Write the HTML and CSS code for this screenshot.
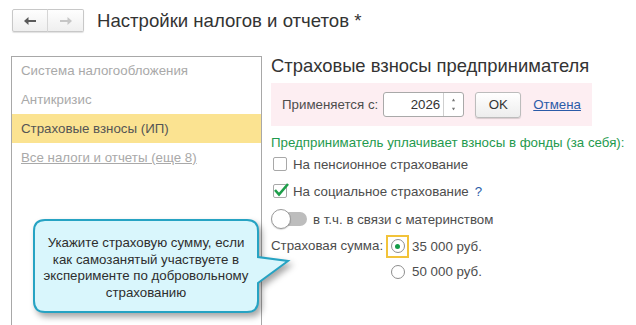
FILE: index.html
```html
<!DOCTYPE html>
<html>
    <head>
        <meta charset="utf-8">
        <meta name="viewport" content="initial-scale=1, width=device-width">
        <title>Настройки налогов и отчетов</title>
        <link rel="stylesheet" href="styles.css">
    </head>
    <body>
    <div class="topbar">
        <div class="history">
            <button class="history-btn" type="button">
                <svg width="12" height="8" viewBox="0 0 12 8"><path d="M0 4 L4.5 0 V3 H12 V5 H4.5 V8 Z" fill="#5a5a5a"/></svg>
            </button>
            <button class="history-btn" type="button">
                <svg width="12" height="8" viewBox="0 0 12 8"><path d="M12 4 L7.5 0 V3 H0 V5 H7.5 V8 Z" fill="#c6c6c6"/></svg>
            </button>
        </div>
        <h1 class="page-title">Настройки налогов и отчетов *</h1>
    </div>

    <div class="workspace">
        <ul class="sections">
            <li class="section">Система налогообложения</li>
            <li class="section">Антикризис</li>
            <li class="section current">Страховые взносы (ИП)</li>
            <li class="section"><a href="#">Все налоги и отчеты (еще 8)</a></li>
        </ul>

        <div class="content">
            <h2 class="content-title">Страховые взносы предпринимателя</h2>
            <div class="apply-bar">
                <span class="apply-label">Применяется с:</span>
                <div class="year-field">
                    <span class="year-value">2026</span>
                    <span class="spin">
                        <svg width="5" height="4" viewBox="0 0 5 4"><path d="M2.5 0 L5 4 H0 Z" fill="#777"/></svg>
                        <svg width="5" height="4" viewBox="0 0 5 4"><path d="M0 0 H5 L2.5 4 Z" fill="#777"/></svg>
                    </span>
                </div>
                <button class="ok-btn" type="button">OK</button>
                <a class="cancel-link" href="#">Отмена</a>
            </div>

            <p class="funds-note">Предприниматель уплачивает взносы в фонды (за себя):</p>
            <div class="option-row row-pension">
                <span class="checkbox"></span>
                На пенсионное страхование
            </div>
            <div class="option-row row-social">
                <span class="checkbox">
                    <svg class="tick" width="16" height="15" viewBox="0 0 16 15"><path d="M2 8 L6 12.5 L15 2" fill="none" stroke="#1e9e4a" stroke-width="2.6"/></svg>
                </span>
                На социальное страхование <span class="help">?</span>
            </div>
            <div class="option-row row-toggle">
                <span class="toggle"><span class="knob"></span></span>
                в т.ч. в связи с материнством
            </div>
            <div class="sum-row">
                <span class="sum-label">Страховая сумма:</span>
                <div class="sum-options">
                    <div class="radio-row first">
                        <span class="radio-focus"><span class="radio on"></span></span>
                        35 000 руб.
                    </div>
                    <div class="radio-row">
                        <span class="radio-focus plain"><span class="radio"></span></span>
                        50 000 руб.
                    </div>
                </div>
            </div>
        </div>
    </div>

    <div class="callout">
        <svg class="callout-shape" width="226" height="94" viewBox="0 0 226 94">
            <path d="M12 1 H214 Q225 1 225 12 V38 L255 42 L225 64 V82 Q225 93 214 93 H12 Q1 93 1 82 V12 Q1 1 12 1 Z" fill="#d9f6fc" stroke="#26a3c3" stroke-width="2"/>
        </svg>
        <div class="callout-text">
            Укажите страховую сумму, если<br>
            как самозанятый участвуете в<br>
            эксперименте по добровольному<br>
            страхованию
        </div>
    </div>
    </body>
</html>
```

FILE: styles.css
```css
body {
    margin: 0;
    height: 100vh;
    overflow: hidden;
    position: relative;
    background-color: #ffffff;
    font-family: "Liberation Sans", Arial, sans-serif;
    font-size: 13.3px;
    color: #4d4d4d;
}
.topbar {
    display: flex;
    align-items: center;
    padding: 9px 0 0 12px;
    height: 23px;
}
.history {
    display: flex;
    box-shadow: 0 1px 1px rgba(0, 0, 0, 0.12);
    border-radius: 2px;
}
.history-btn {
    display: flex;
    align-items: center;
    justify-content: center;
    width: 36px;
    height: 23px;
    padding: 0;
    box-sizing: border-box;
    border: 1px solid #c8c8c8;
    background: linear-gradient(#fefefe, #efefef);
}
.history-btn:first-child {
    border-radius: 2px 0 0 2px;
}
.history-btn + .history-btn {
    border-left: 1px solid #d6d6d6;
    margin-left: -1px;
    width: 37px;
    border-radius: 0 2px 2px 0;
}
.page-title {
    margin: 0 0 0 13px;
    font-size: 18.6px;
    font-weight: normal;
    line-height: 23px;
    color: #333333;
}
.workspace {
    display: flex;
    margin-top: 24px;
    padding-left: 11px;
}
.sections {
    list-style: none;
    margin: 0;
    padding: 0;
    width: 251px;
    height: 300px;
    box-sizing: border-box;
    border: 1px solid #a8a8a8;
    border-bottom: 0;
}
.section {
    height: 29px;
    line-height: 29px;
    padding-left: 9px;
    color: #a9a9a9;
}
.section:first-child {
    height: 28px;
    line-height: 27px;
}
.section.current {
    background-color: #fbe391;
    color: #555555;
}
.section a {
    color: #a9a9a9;
}
.content {
    margin-left: 9px;
    flex: 1;
}
.content-title {
    margin: 0;
    font-size: 18.4px;
    font-weight: normal;
    line-height: 20px;
    color: #333333;
}
.apply-bar {
    display: flex;
    align-items: center;
    margin-top: 7px;
    width: 321px;
    height: 43px;
    padding-left: 11px;
    box-sizing: border-box;
    background-color: #fdeef2;
}
.apply-label {
    margin-right: 5px;
}
.year-field {
    display: flex;
    width: 81px;
    height: 25px;
    box-sizing: border-box;
    border: 1px solid #a9a9a9;
    border-radius: 3px;
    background-color: #ffffff;
}
.year-value {
    flex: 1;
    text-align: right;
    padding-right: 3px;
    line-height: 23px;
    color: #333333;
}
.spin {
    width: 20px;
    border-left: 1px solid #cfcfcf;
    display: flex;
    flex-direction: column;
    align-items: center;
    justify-content: space-between;
    padding: 5px 0;
    box-sizing: border-box;
}
.spin svg {
    display: block;
    transform: scale(0.7);
}
.ok-btn {
    margin-left: 11px;
    width: 46px;
    height: 26px;
    padding: 0;
    border: 1px solid #bcbcbc;
    border-radius: 3px;
    background: linear-gradient(#ffffff, #ededed);
    box-shadow: 0 1px 1px rgba(0, 0, 0, 0.15);
    font-family: inherit;
    font-size: 13.3px;
    color: #333333;
}
.cancel-link {
    margin-left: 12px;
    color: #2b5ba8;
}
.funds-note {
    margin: 9px 0 0;
    line-height: 16px;
    color: #1f9a4e;
}
.option-row {
    display: flex;
    align-items: center;
    height: 26px;
}
.row-social,
.row-toggle {
    height: 28px;
}
.checkbox {
    position: relative;
    width: 14px;
    height: 14px;
    margin: 0 6px 0 2px;
    box-sizing: border-box;
    border: 1px solid #a8a8a8;
    border-radius: 2px;
    background-color: #ffffff;
}
.tick {
    position: absolute;
    left: -1px;
    top: -3px;
}
.help {
    margin-left: 6px;
    color: #2b5ba8;
}
.toggle {
    position: relative;
    width: 36px;
    height: 20px;
    margin-right: 6px;
}
.toggle::before {
    content: "";
    position: absolute;
    left: 10px;
    right: 0;
    top: 3px;
    height: 14px;
    border-radius: 7px;
    background-color: #bdbdbd;
}
.knob {
    position: absolute;
    left: 0;
    top: 0;
    width: 20px;
    height: 20px;
    box-sizing: border-box;
    border-radius: 50%;
    border: 1px solid #9a9a9a;
    background-color: #ffffff;
    box-shadow: 0 1px 1px rgba(0, 0, 0, 0.15);
}
.sum-row {
    display: flex;
    align-items: flex-start;
}
.sum-label {
    line-height: 26px;
    margin-right: 3px;
}
.radio-row {
    display: flex;
    align-items: center;
    height: 25px;
}
.radio-row.first {
    height: 26px;
}
.radio-focus {
    display: flex;
    align-items: center;
    justify-content: center;
    width: 23px;
    height: 23px;
    margin-right: 3px;
    box-sizing: border-box;
    border: 2px solid #f2c33a;
}
.radio-focus.plain {
    border-color: transparent;
}
.radio {
    display: flex;
    align-items: center;
    justify-content: center;
    width: 14px;
    height: 14px;
    box-sizing: border-box;
    border-radius: 50%;
    border: 1px solid #8e8e8e;
    background-color: #ffffff;
}
.radio.on::after {
    content: "";
    width: 5px;
    height: 5px;
    border-radius: 50%;
    background-color: #149c48;
}
.callout {
    position: absolute;
    left: 33px;
    top: 219px;
    width: 226px;
    height: 94px;
}
.callout-shape {
    position: absolute;
    left: 0;
    top: 0;
    overflow: visible;
    filter: drop-shadow(3px 4px 3px rgba(0, 0, 0, 0.35));
}
.callout-text {
    position: relative;
    display: flex;
    align-items: center;
    justify-content: center;
    height: 100%;
    padding-top: 4px;
    box-sizing: border-box;
    text-align: center;
    line-height: 16.5px;
    white-space: nowrap;
    color: #2e2e2e;
}
```
